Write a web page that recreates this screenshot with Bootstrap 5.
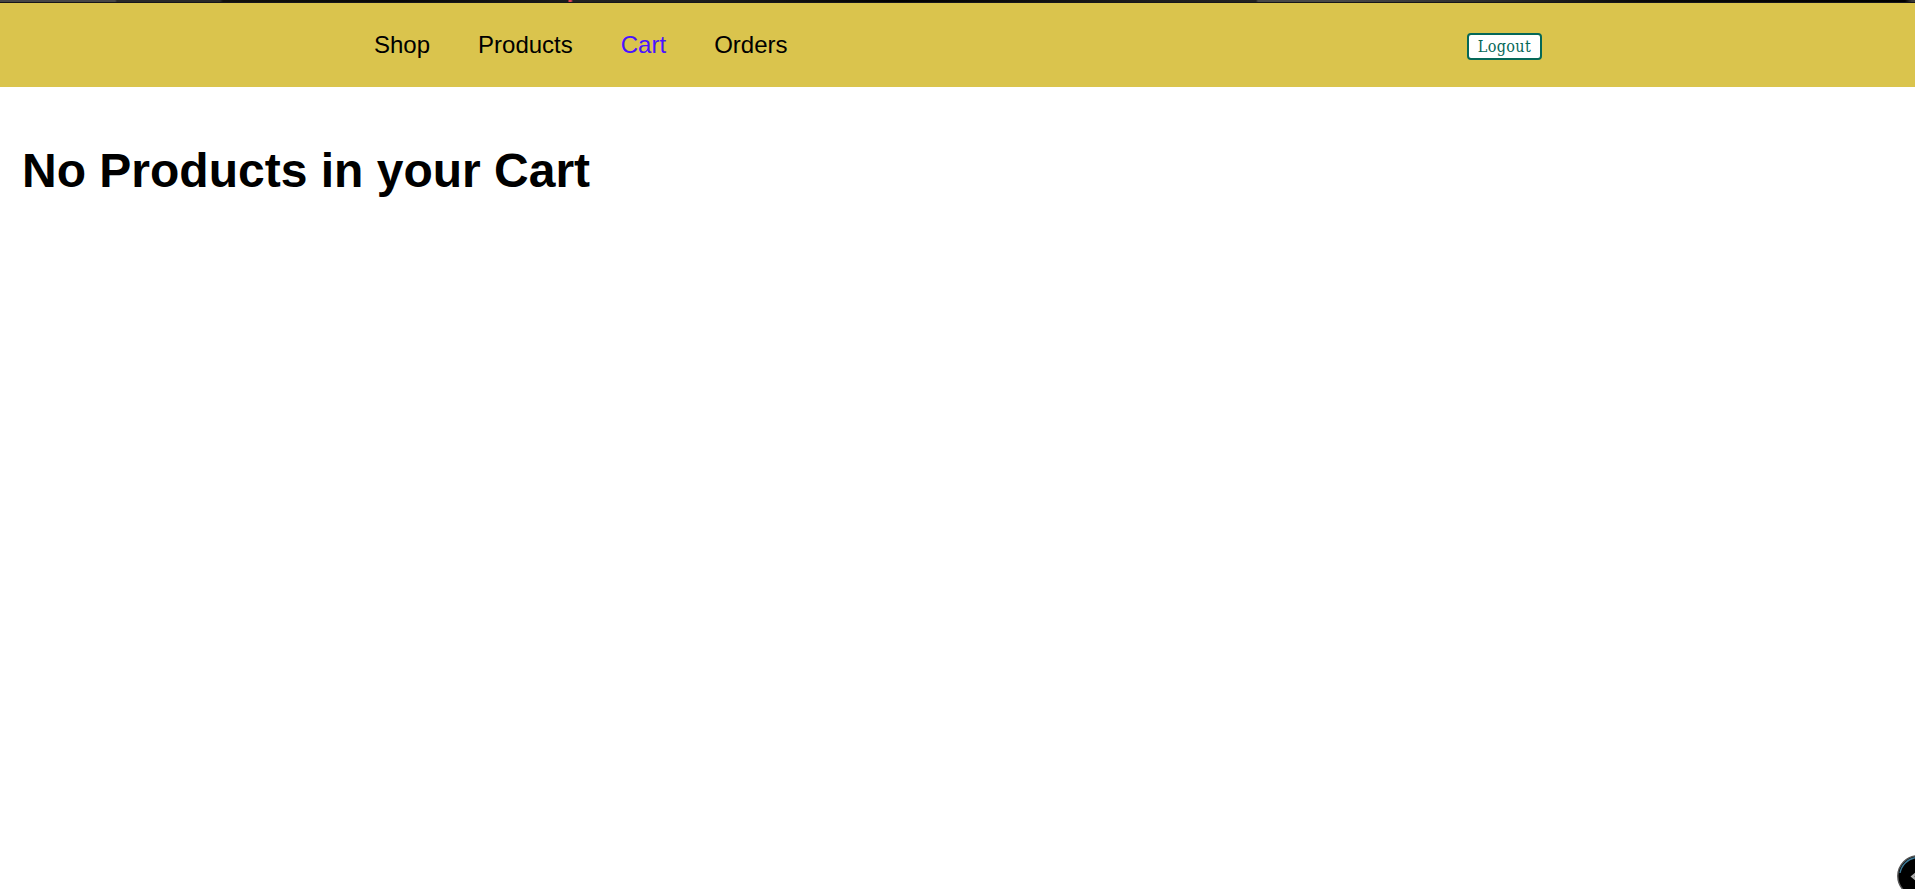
<!DOCTYPE html>
<html lang="en">
<head>
<meta charset="utf-8">
<meta name="viewport" content="width=device-width, initial-scale=1">
<title>Cart</title>
<link href="https://cdn.jsdelivr.net/npm/bootstrap@5.3.0/dist/css/bootstrap.min.css" rel="stylesheet">
<style>
body{font-family:"Liberation Sans",Arial,sans-serif;color:#000;background:#fff}
.top-strip{height:3px;background:linear-gradient(#0000 2px,#16161a 2px),linear-gradient(90deg,#464646 0 115px,#292929 117px 220px,#11110c 223px,#080808 400px,#1b1b1b 568px,#dc4054 569px 571px,#222 573px,#1d1d1d 700px,#000 900px,#1d1d1d 1150px,#222 1256px,#484848 1258px 1340px,#292929 1500px,#090909 1640px,#000 1905px,#383838 1912px)}
.shop-nav{height:84px;background:#dac44d;padding:0 373px 0 374px}
.shop-nav .nav{gap:48px}
.shop-nav .nav-link{padding:0;font-size:24px;line-height:28px;color:#000}
.shop-nav .nav-link.active{color:#4a12ff}
.btn-logout{width:75px;height:27px;padding:0;border:2px solid #056858;border-radius:4px;background:#fff;color:#056858;font:16px/24px "DejaVu Serif Condensed","DejaVu Serif",serif;font-stretch:condensed;letter-spacing:.35px;margin-top:3px}
.cart-title{font-size:48px;line-height:56px;margin:56px 0 0 22px}
.float-badge{right:-24px;bottom:-8px;width:42px;height:42px}
</style>
</head>
<body class="vh-100 overflow-hidden position-relative">
<div class="top-strip"></div>
<nav class="shop-nav d-flex align-items-center justify-content-between">
  <ul class="nav">
    <li class="nav-item"><a class="nav-link" href="#">Shop</a></li>
    <li class="nav-item"><a class="nav-link" href="#">Products</a></li>
    <li class="nav-item"><a class="nav-link active" href="#">Cart</a></li>
    <li class="nav-item"><a class="nav-link" href="#">Orders</a></li>
  </ul>
  <button class="btn btn-logout" type="button">Logout</button>
</nav>
<main><h1 class="cart-title fw-bold">No Products in your Cart</h1></main>
<svg class="float-badge position-absolute" viewBox="0 0 42 42" aria-hidden="true">
  <circle cx="21" cy="21" r="20.2" fill="#000" stroke="#555" stroke-width="1.4"/>
  <path d="M3 18A19 19 0 0 1 19 2.5" fill="none" stroke="#3b7896" stroke-width="1.4"/>
  <path d="M13.5 21.5l6-5v3l-2 2 2 2v3z" fill="#aaa"/>
</svg>
<script src="https://cdn.jsdelivr.net/npm/bootstrap@5.3.0/dist/js/bootstrap.bundle.min.js"></script>
</body>
</html>
